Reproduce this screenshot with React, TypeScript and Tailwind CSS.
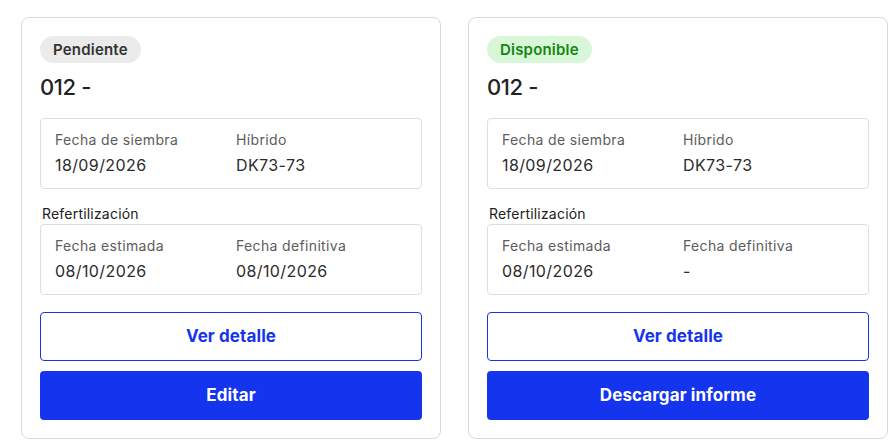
type Field = { label: string; value: string };

type Lote = {
  status: string;
  statusClass: string;
  title: string;
  siembra: Field[];
  refert: Field[];
  action: string;
};

const lotes: Lote[] = [
  {
    status: "Pendiente",
    statusClass: "bg-[#ebebeb] text-[#333]",
    title: "012 -",
    siembra: [
      { label: "Fecha de siembra", value: "18/09/2026" },
      { label: "Híbrido", value: "DK73-73" },
    ],
    refert: [
      { label: "Fecha estimada", value: "08/10/2026" },
      { label: "Fecha definitiva", value: "08/10/2026" },
    ],
    action: "Editar",
  },
  {
    status: "Disponible",
    statusClass: "bg-[#d8f6d8] text-[#13860f]",
    title: "012 -",
    siembra: [
      { label: "Fecha de siembra", value: "18/09/2026" },
      { label: "Híbrido", value: "DK73-73" },
    ],
    refert: [
      { label: "Fecha estimada", value: "08/10/2026" },
      { label: "Fecha definitiva", value: "-" },
    ],
    action: "Descargar informe",
  },
];

function InfoBox({ fields }: { fields: Field[] }) {
  return (
    <div className="grid grid-cols-2 gap-x-[10px] rounded-[4px] border border-[#dedede] px-[14px] pt-[11px] pb-[12px]">
      {fields.map((f) => (
        <div key={f.label} className="flex flex-col">
          <span className="text-[14px] leading-[20px] tracking-[0.35px] text-[#5c5c5c]">{f.label}</span>
          <span className="mt-[4px] text-[16px] leading-[22px] tracking-[0.4px] text-[#2b2b2b]">{f.value}</span>
        </div>
      ))}
    </div>
  );
}

function LoteCard({ lote }: { lote: Lote }) {
  return (
    <div className="flex w-[420px] shrink-0 flex-col rounded-[8px] border border-[#d9d9d9] bg-white px-[18px] pt-[18px] pb-[18px]">
      <span className={`self-start rounded-full px-[13px] py-[4px] text-[15px] font-semibold leading-[19px] tracking-[0.2px] ${lote.statusClass}`}>
        {lote.status}
      </span>
      <h2 className="mt-[9px] text-[22px] font-medium leading-[30px] tracking-[-0.4px] text-[#222]">{lote.title}</h2>
      <div className="mt-[16px]">
        <InfoBox fields={lote.siembra} />
      </div>
      <span className="mt-[16px] pl-[2px] text-[14px] leading-[18px] tracking-[0.2px] text-[#222]">Refertilización</span>
      <div className="mt-[1px]">
        <InfoBox fields={lote.refert} />
      </div>
      <button className="mt-[17px] h-[49px] rounded-[4px] border border-[#1534ee] bg-white text-[17px] font-bold tracking-[0.1px] text-[#1534ee]">
        Ver detalle
      </button>
      <button className="mt-[10px] h-[49px] rounded-[4px] bg-[#1434ee] text-[17px] font-bold tracking-[0.1px] text-white">
        {lote.action}
      </button>
    </div>
  );
}

export default function App() {
  return (
    <div className="min-h-screen bg-white font-['Inter',sans-serif]">
      <div className="flex gap-[27px] px-[21px] pt-[17px]">
        {lotes.map((l, i) => (
          <LoteCard key={i} lote={l} />
        ))}
      </div>
    </div>
  );
}
